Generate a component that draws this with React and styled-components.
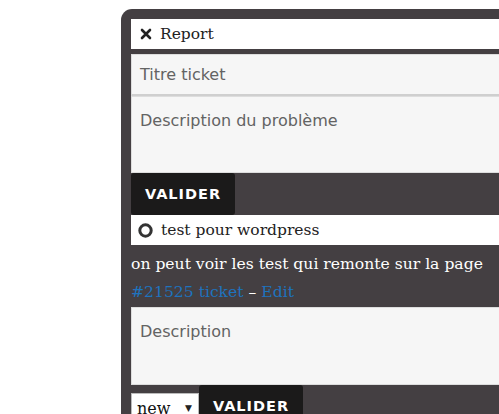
import React from "react";
import styled, { createGlobalStyle } from "styled-components";

const Global = createGlobalStyle`
  html, body { margin: 0; padding: 0; background: #fff; overflow: hidden; }
  body { width: 499px; height: 414px; }
`;

const serif = `"DejaVu Serif", "Liberation Serif", serif`;
const sans = `"DejaVu Sans", "Noto Sans", sans-serif`;

const Page = styled.div`
  padding: 9px 0 0 121px;
`;

const Panel = styled.div`
  width: 420px;
  min-height: 420px;
  background: #443f42;
  border-radius: 11px 0 0 0;
  padding: 10px 0 0 10px;
  display: flex;
  flex-direction: column;
`;

const Bar = styled.div`
  height: 30px;
  background: #fff;
  display: flex;
  align-items: center;
  gap: 8px;
  padding-left: ${p => p.$pad || 9}px;
  font-family: ${serif};
  font-size: 15.5px;
  color: #222;
  margin-bottom: ${p => p.$mb || 0}px;
`;

const Field = styled.div`
  box-sizing: border-box;
  height: ${p => p.$h}px;
  background: #f6f6f6;
  border: 1px solid #ddd;
  border-bottom-color: ${p => (p.$line ? "#cfcfcf" : "#ddd")};
  border-bottom-width: ${p => (p.$line ? 2 : 1)}px;
  padding: ${p => p.$pt}px 8px 0 8px;
  font-family: ${sans};
  font-size: 16px;
  color: #636363;
`;

const Button = styled.button`
  box-sizing: border-box;
  width: 104px;
  height: 42px;
  border: 0;
  border-radius: 3px;
  background: #1b1a1a;
  color: #fff;
  font-family: ${sans};
  font-weight: bold;
  font-size: 14.5px;
  letter-spacing: 1px;
  text-transform: uppercase;
  padding: 0;
  align-self: flex-start;
`;

const Text = styled.div`
  font-family: ${serif};
  font-size: 15.6px;
  line-height: 28px;
  color: #fff;
  padding: 5px 0 1px 0;
  white-space: nowrap;
`;

const Link = styled.a`
  color: #1e73be;
  text-decoration: none;
`;

const Dash = styled.span`
  color: #fff;
`;

const Row = styled.div`
  display: flex;
  align-items: flex-start;
`;

const Select = styled.div`
  box-sizing: border-box;
  margin-top: 8px;
  width: 68px;
  height: 30px;
  background: #fff;
  border: 1px solid #bbb;
  display: flex;
  align-items: center;
  justify-content: space-between;
  padding: 0 6px 0 5px;
  font-family: ${serif};
  font-size: 16px;
  color: #111;
`;

const Arrow = styled.span`
  font-size: 9px;
  color: #222;
`;

const XIcon = () => (
  <svg width="12" height="12" viewBox="0 0 12 12">
    <path d="M2 2 L10 10 M10 2 L2 10" stroke="#222" strokeWidth="2.6" strokeLinecap="round" />
  </svg>
);

const CircleIcon = () => (
  <svg width="15" height="15" viewBox="0 0 15 15">
    <circle cx="7.5" cy="7.5" r="5.7" fill="none" stroke="#333" strokeWidth="3" />
  </svg>
);

export default function App() {
  return (
    <>
      <Global />
      <Page>
        <Panel>
          <Bar $mb={5}>
            <XIcon />
            <span>Report</span>
          </Bar>
          <Field $h={42} $pt={10} $line>Titre ticket</Field>
          <Field $h={77} $pt={14}>Description du problème</Field>
          <Button>Valider</Button>
          <Bar $pad={7}>
            <CircleIcon />
            <span>test pour wordpress</span>
          </Bar>
          <Text>
            on peut voir les test qui remonte sur la page
            <br />
            <Link href="#">#21525 ticket</Link>
            <Dash> – </Dash>
            <Link href="#">Edit</Link>
          </Text>
          <Field $h={78} $pt={14}>Description</Field>
          <Row>
            <Select>
              <span>new</span>
              <Arrow>▼</Arrow>
            </Select>
            <Button>Valider</Button>
          </Row>
        </Panel>
      </Page>
    </>
  );
}
